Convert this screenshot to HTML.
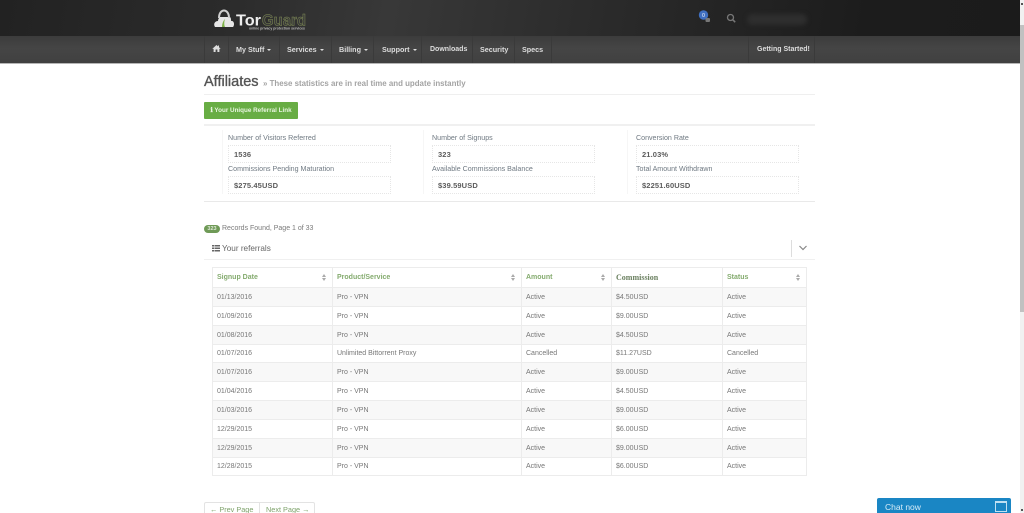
<!DOCTYPE html>
<html>
<head>
<meta charset="utf-8">
<style>
html,body{margin:0;padding:0;width:1024px;height:513px;overflow:hidden;background:#fff}
body{font-family:"Liberation Sans",sans-serif;position:relative;color:#666;filter:blur(.25px)}
.a{position:absolute;white-space:nowrap}
#top{left:0;top:0;width:1020px;height:36px;background:linear-gradient(100deg,#222 0,#2b2b2b 22%,#383838 38%,#2a2a2a 60%,#1c1c1c 85%,#1b1b1b 100%)}
#nav{left:0;top:36px;width:1020px;height:28px;background:linear-gradient(#3c3c3c,#454545 45%,#404040);border-bottom:1px solid #b5b5b5;box-sizing:border-box}
.nv{position:absolute;top:45px;font-size:7.2px;font-weight:bold;color:#ddd;line-height:10px;white-space:nowrap}
.sep{position:absolute;top:36px;width:1px;height:27px;background:#3a3a3a}
.car{display:inline-block;width:0;height:0;border-left:2px solid transparent;border-right:2px solid transparent;border-top:2px solid #ddd;margin-left:3px;vertical-align:1px}
.hr{position:absolute;height:1px;background:#e9e9e9}
.lb{position:absolute;font-size:7.1px;color:#6f7982;line-height:9px;white-space:nowrap}
.bx{position:absolute;width:163px;height:18px;box-sizing:border-box;border:1px dotted #e6e6e6;font-size:7.5px;font-weight:bold;color:#5c5c5c;padding-left:5px;line-height:17px;letter-spacing:.12px}
.vs{position:absolute;width:1px;top:130px;height:64px;background:#f6f6f6}
#tb{position:absolute;left:212px;top:267px;width:594px;border-collapse:collapse;table-layout:fixed;font-size:7px;color:#777}
#tb td,#tb th{border:1px solid #ececec;padding:1px 0 0 4px;text-align:left;height:19px;box-sizing:border-box;line-height:10px;overflow:hidden;white-space:nowrap}
#tb tr.s td{height:18px}
#tb th{height:20px;color:#84ab6e;font-size:7px;font-weight:bold;position:relative;padding-left:4px}
#tb th.c{color:#6b8060;font-family:"Liberation Serif",serif;font-size:8px}
#tb th i{position:absolute;right:6px;top:6px;width:0;height:0;border-left:2px solid transparent;border-right:2px solid transparent;border-bottom:3px solid #aaa}
#tb th i:after{content:"";position:absolute;left:-2px;top:4px;width:0;height:0;border-left:2px solid transparent;border-right:2px solid transparent;border-top:3px solid #aaa}
#tb tr.o td{background:#f8f8f8}
</style>
</head>
<body>
<div class="a" id="top"></div>
<div class="a" id="nav"></div>

<!-- logo -->
<svg class="a" style="left:212px;top:7px" width="100" height="26" viewBox="0 0 100 26">
<path d="M3 20c-2-3 0-6 3-6 0-2 1-3 2-4h10c1 1 1 2 1 4 3-1 4 4 2 6z" fill="#e6e6e6"/>
<path d="M7 11c0-10 10-10 10 0" fill="none" stroke="#cfcfcf" stroke-width="2"/>
<path d="M10 20c0-3 1-6 3-8-1 3-1 6 0 8z" fill="#7fb24a"/>
<text x="24" y="18.500" font-family="Liberation Sans,sans-serif" font-size="15.500" font-weight="bold" fill="#eee" textLength="25" lengthAdjust="spacingAndGlyphs">Tor</text>
<text x="50" y="18.500" font-family="Liberation Sans,sans-serif" font-size="15.500" font-weight="bold" fill="#3a3a3a" stroke="#808d55" stroke-width=".5" textLength="44" lengthAdjust="spacingAndGlyphs">Guard</text>
<text x="37" y="22.500" font-family="Liberation Sans,sans-serif" font-size="3.800" font-weight="bold" fill="#bbb" textLength="56" lengthAdjust="spacingAndGlyphs">online privacy protection services</text>
</svg>

<!-- header right -->
<svg class="a" style="left:696px;top:8px" width="50" height="18" viewBox="0 0 50 18">
<circle cx="7.500" cy="7" r="4.700" fill="#3f6fc0"/>
<text x="7.500" y="9" font-size="5" fill="#fff" text-anchor="middle" font-family="Liberation Sans,sans-serif">0</text>
<rect x="9.500" y="10" width="4.500" height="4" rx="1" fill="#777"/>
<circle cx="34.500" cy="9.500" r="3" fill="none" stroke="#777" stroke-width="1.300"/>
<path d="M36.700 11.700l2.500 2.500" stroke="#777" stroke-width="1.500"/>
</svg>
<div class="a" style="left:747px;top:14px;width:60px;height:11px;border-radius:6px;background:#2e2e2e;filter:blur(2px)"></div>

<!-- nav -->
<div class="sep" style="left:204px"></div>
<svg class="a" style="left:212px;top:44px" width="9" height="9" viewBox="0 0 9 9"><path d="M4.500 1 .5 4.600l.5.500.6-.5V8h2V5.500h1.800V8h2V4.600l.6.500.5-.5L7 3.300V1.500H6v.9z" fill="#ddd"/></svg>
<div class="sep" style="left:228px"></div>
<div class="nv" style="left:236px">My Stuff<span class="car"></span></div>
<div class="sep" style="left:279px"></div>
<div class="nv" style="left:287px">Services<span class="car"></span></div>
<div class="sep" style="left:331px"></div>
<div class="nv" style="left:339px">Billing<span class="car"></span></div>
<div class="sep" style="left:373px"></div>
<div class="nv" style="left:382px">Support<span class="car"></span></div>
<div class="sep" style="left:421px"></div>
<div class="nv" style="left:430px;font-size:7px">Downloads</div>
<div class="sep" style="left:472px"></div>
<div class="nv" style="left:480px">Security</div>
<div class="sep" style="left:514px"></div>
<div class="nv" style="left:522px">Specs</div>
<div class="sep" style="left:551px"></div>
<div class="sep" style="left:748px"></div>
<div class="nv" style="left:757px;font-size:7px">Getting Started!</div>
<div class="sep" style="left:814px"></div>

<!-- title -->
<div class="a" style="left:204px;top:74px;font-size:14.500px;color:#555;line-height:16px;-webkit-text-stroke:.35px #555">Affiliates</div>
<div class="a" style="left:263px;top:78px;font-size:7.900px;font-weight:bold;color:#a3a3a3;line-height:11px">» These statistics are in real time and update instantly</div>
<div class="hr" style="left:204px;top:94px;width:611px;background:#efefef"></div>
<div class="a" style="left:204px;top:102px;width:94px;height:17px;background:#68ad44;color:#e8f5e0;font-size:6.300px;font-weight:bold;line-height:18px;text-align:center;border-radius:1px">ℹ Your Unique Referral Link</div>
<div class="hr" style="left:204px;top:124px;width:611px;height:2px;background:#f0f0f0"></div>

<!-- stats -->
<div class="vs" style="left:222px"></div><div class="vs" style="left:423px"></div><div class="vs" style="left:627px"></div>
<div class="lb" style="left:228px;top:134px">Number of Visitors Referred</div>
<div class="bx" style="left:228px;top:145px">1536</div>
<div class="lb" style="left:228px;top:165px">Commissions Pending Maturation</div>
<div class="bx" style="left:228px;top:176px">$275.45USD</div>
<div class="lb" style="left:432px;top:134px">Number of Signups</div>
<div class="bx" style="left:432px;top:145px">323</div>
<div class="lb" style="left:432px;top:165px">Available Commissions Balance</div>
<div class="bx" style="left:432px;top:176px">$39.59USD</div>
<div class="lb" style="left:636px;top:134px">Conversion Rate</div>
<div class="bx" style="left:636px;top:145px">21.03%</div>
<div class="lb" style="left:636px;top:165px">Total Amount Withdrawn</div>
<div class="bx" style="left:636px;top:176px">$2251.60USD</div>
<div class="hr" style="left:204px;top:201px;width:611px"></div>

<!-- records -->
<div class="a" style="left:204px;top:225px;width:16px;height:8px;border-radius:4px;background:#6f9a57;color:#dfe9d8;font-size:5.500px;line-height:8px;text-align:center;font-weight:bold">323</div>
<div class="a" style="left:222px;top:224px;font-size:7px;color:#7a7a7a;line-height:10px">Records Found, Page 1 of 33</div>
<svg class="a" style="left:212px;top:245px" width="8" height="7" viewBox="0 0 8 7"><path d="M0 0h2v1.500H0zM2.500 0H8v1.500H2.500zM0 2.500h2V4H0zM2.500 2.500H8V4H2.500zM0 5h2v1.500H0zM2.500 5H8v1.500H2.500z" fill="#666"/></svg>
<div class="a" style="left:222px;top:244px;font-size:8.200px;color:#666;line-height:10px">Your referrals</div>
<div class="a" style="left:791px;top:240px;width:1px;height:17px;background:#ddd"></div>
<svg class="a" style="left:799px;top:245px" width="8" height="6" viewBox="0 0 8 6"><path d="M.5 1 4 4.500 7.500 1" fill="none" stroke="#888" stroke-width="1.200"/></svg>
<div class="hr" style="left:204px;top:259px;width:611px;background:#f0f0f0"></div>

<!-- table -->
<table id="tb">
<colgroup><col style="width:120px"><col style="width:189px"><col style="width:90px"><col style="width:111px"><col style="width:84px"></colgroup>
<tr><th>Signup Date<i></i></th><th>Product/Service<i></i></th><th>Amount<i></i></th><th class="c">Commission</th><th>Status<i></i></th></tr>
<tr class="o"><td>01/13/2016</td><td>Pro - VPN</td><td>Active</td><td>$4.50USD</td><td>Active</td></tr>
<tr><td>01/09/2016</td><td>Pro - VPN</td><td>Active</td><td>$9.00USD</td><td>Active</td></tr>
<tr class="o"><td>01/08/2016</td><td>Pro - VPN</td><td>Active</td><td>$4.50USD</td><td>Active</td></tr>
<tr class="s"><td>01/07/2016</td><td>Unlimited Bittorrent Proxy</td><td>Cancelled</td><td>$11.27USD</td><td>Cancelled</td></tr>
<tr class="o"><td>01/07/2016</td><td>Pro - VPN</td><td>Active</td><td>$9.00USD</td><td>Active</td></tr>
<tr><td>01/04/2016</td><td>Pro - VPN</td><td>Active</td><td>$4.50USD</td><td>Active</td></tr>
<tr class="o"><td>01/03/2016</td><td>Pro - VPN</td><td>Active</td><td>$9.00USD</td><td>Active</td></tr>
<tr><td>12/29/2015</td><td>Pro - VPN</td><td>Active</td><td>$6.00USD</td><td>Active</td></tr>
<tr class="o"><td>12/29/2015</td><td>Pro - VPN</td><td>Active</td><td>$9.00USD</td><td>Active</td></tr>
<tr class="s"><td>12/28/2015</td><td>Pro - VPN</td><td>Active</td><td>$6.00USD</td><td>Active</td></tr>
</table>

<!-- pager -->
<div class="a" style="left:204px;top:502px;width:111px;height:20px;border:1px solid #e3e3e3;box-sizing:border-box;border-radius:2px"></div>
<div class="a" style="left:259px;top:502px;width:1px;height:11px;background:#e3e3e3"></div>
<div class="a" style="left:210px;top:505px;font-size:7.300px;color:#7fa36c;line-height:10px">← Prev Page</div>
<div class="a" style="left:266px;top:505px;font-size:7.300px;color:#7fa36c;line-height:10px">Next Page →</div>

<!-- chat -->
<div class="a" style="left:877px;top:498px;width:134px;height:15px;background:#1a86c4;border-radius:2px 2px 0 0"></div>
<div class="a" style="left:885px;top:502px;font-size:8.500px;color:#d8edf8;line-height:11px">Chat now</div>
<div class="a" style="left:995px;top:501px;width:12px;height:11px;box-sizing:border-box;border:1px solid #bfe0f2;border-top-width:2px"></div>

<!-- scrollbar -->
<div class="a" style="left:1020px;top:0;width:4px;height:513px;background:#f1f1f1"></div>
<div class="a" style="left:1020px;top:25px;width:4px;height:287px;background:#c1c1c1"></div>
<div class="a" style="left:1021px;top:3px;width:2px;height:2px;background:#555"></div>
<div class="a" style="left:1021px;top:509px;width:2px;height:2px;background:#555"></div>
</body>
</html>
